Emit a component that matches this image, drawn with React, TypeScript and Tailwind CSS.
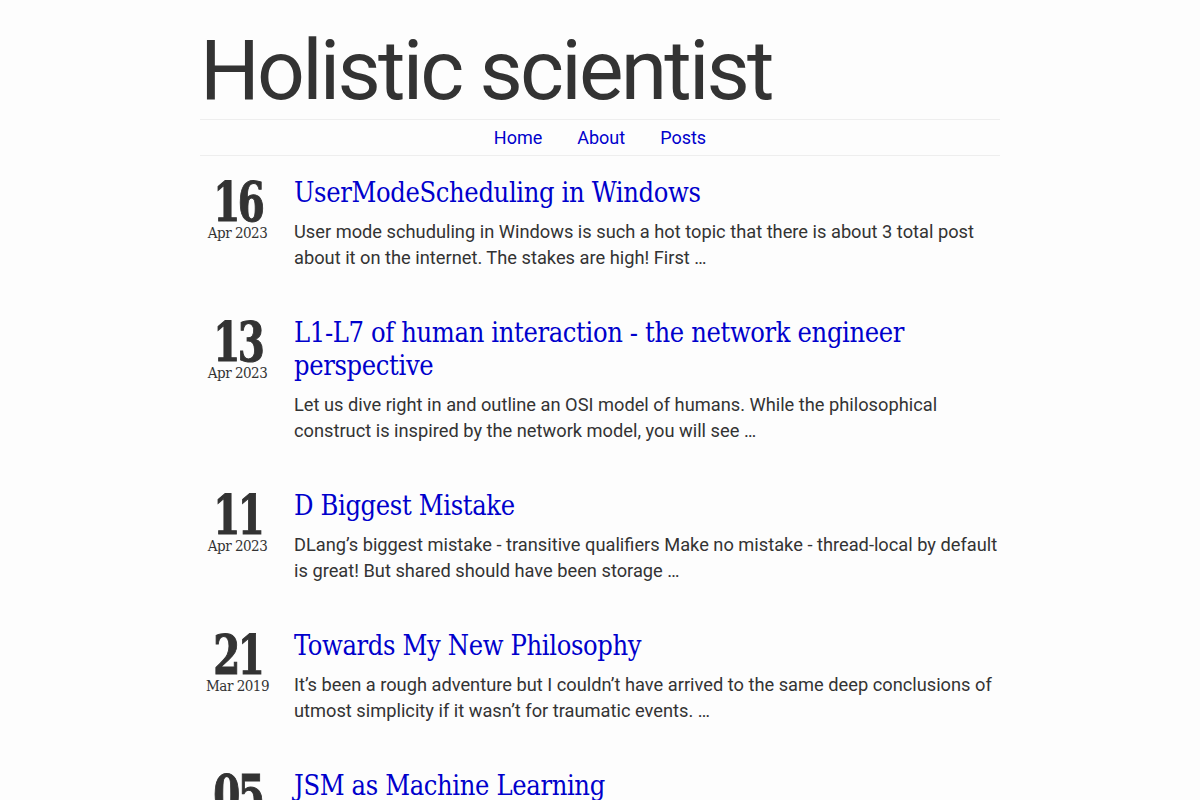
import React from "react"

const posts = [
  {
    day: "16",
    month: "Apr 2023",
    title: "UserModeScheduling in Windows",
    excerpt:
      "User mode schuduling in Windows is such a hot topic that there is about 3 total post about it on the internet. The stakes are high! First …",
  },
  {
    day: "13",
    month: "Apr 2023",
    title: "L1-L7 of human interaction - the network engineer perspective",
    excerpt:
      "Let us dive right in and outline an OSI model of humans. While the philosophical construct is inspired by the network model, you will see …",
  },
  {
    day: "11",
    month: "Apr 2023",
    title: "D Biggest Mistake",
    excerpt:
      "DLang’s biggest mistake - transitive qualifiers Make no mistake - thread-local by default is great! But shared should have been storage …",
  },
  {
    day: "21",
    month: "Mar 2019",
    title: "Towards My New Philosophy",
    excerpt:
      "It’s been a rough adventure but I couldn’t have arrived to the same deep conclusions of utmost simplicity if it wasn’t for traumatic events. …",
  },
  {
    day: "05",
    month: "Feb 2019",
    title: "JSM as Machine Learning",
    excerpt:
      "Some thoughts on how a joint state machine could be seen as a machine learning model …",
  },
]

const slab = "font-['Roboto_Slab','DejaVu_Serif_Condensed','DejaVu_Serif',serif]"

export default function App() {
  return (
    <div className="min-h-screen bg-[#fdfdfd] font-['Roboto','Liberation_Sans',sans-serif] text-[#333]">
      <div className="mx-auto w-[800px]">
        <header className="pt-[29px]">
          <h1 className="text-[84px] leading-none font-normal tracking-[-2.8px]">Holistic scientist</h1>
          <nav className="mt-[6px] flex h-[37px] items-center justify-center gap-[35px] border-y border-[#eeeeee] text-[18px] text-[#0000cc]">
            <a href="#">Home</a>
            <a href="#">About</a>
            <a href="#">Posts</a>
          </nav>
        </header>

        <main className="flex flex-col gap-[45px] pt-[20px]">
          {posts.map((p) => (
            <article key={p.title} className="flex gap-[19px]">
              <div className={`flex w-[75px] shrink-0 flex-col items-center pt-[4px] ${slab}`}>
                <div className="scale-x-[0.8] text-[54px] leading-[44px] font-bold tracking-[-3px] [-webkit-text-stroke:1px_#333]">
                  {p.day}
                </div>
                <div className="text-[15px] leading-[18px] tracking-[-0.5px]">{p.month}</div>
              </div>
              <div className="min-w-0 flex-1">
                <h2 className={`text-[27px] leading-[33px] tracking-[-0.35px] text-[#0000cc] ${slab}`}>
                  <a href="#">{p.title}</a>
                </h2>
                <p className="mt-[10px] text-[18.25px] leading-[26px]">{p.excerpt}</p>
              </div>
            </article>
          ))}
        </main>
      </div>
    </div>
  )
}
